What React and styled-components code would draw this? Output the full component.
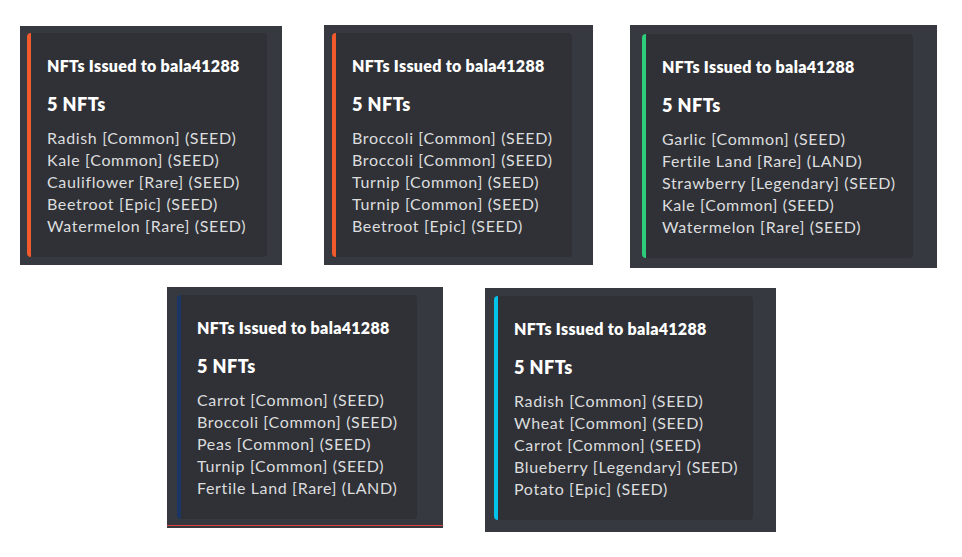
import React from "react";
import styled, { createGlobalStyle, css } from "styled-components";

const Global = createGlobalStyle`
  html, body { margin: 0; padding: 0; background: #ffffff; }
  body { font-family: Lato, "Noto Sans", "Liberation Sans", sans-serif; }
`;

const Page = styled.div`
  width: 962px;
  height: 557px;
  background: #ffffff;
  display: flex;
  flex-direction: column;
  overflow: hidden;
`;

const Row = styled.div`
  display: flex;
  align-items: flex-start;
  padding-top: ${(p) => p.$top}px;
  padding-left: ${(p) => p.$left}px;
`;

const Panel = styled.div`
  background: #36393f;
  display: flex;
  align-items: flex-start;
  margin-left: ${(p) => p.$ml || 0}px;
  margin-top: ${(p) => p.$mt || 0}px;
  padding: ${(p) => p.$pad};
  width: ${(p) => p.$w}px;
  height: ${(p) => p.$h}px;
  box-sizing: border-box;
  ${(p) =>
    p.$redLine &&
    css`
      box-shadow: inset 0 -2px 0 0 #36393f, inset 0 -3px 0 0 #e0413f;
    `}
`;

const Card = styled.div`
  background: #2f3136;
  border-left: 4px solid ${(p) => p.$color};
  border-radius: 4px;
  box-sizing: border-box;
  width: ${(p) => p.$w}px;
  height: 224px;
  padding: 22px 16px 0 16px;
  display: flex;
  flex-direction: column;
`;

const Title = styled.div`
  color: #ffffff;
  font-weight: 800;
  font-size: 16px;
  line-height: 22px;
  white-space: nowrap;
  letter-spacing: 0.3px;
`;

const Count = styled.div`
  color: #ffffff;
  font-weight: 800;
  font-size: 18px;
  line-height: 24px;
  margin-top: 15px;
  white-space: nowrap;
  letter-spacing: 0.5px;
`;

const List = styled.div`
  margin-top: 11px;
  color: #dcddde;
  font-size: 16px;
  line-height: 22px;
  white-space: nowrap;
  letter-spacing: 0.65px;
`;

const Item = styled.div``;

const cards = [
  {
    color: "#f2592b",
    items: [
      "Radish [Common] (SEED)",
      "Kale [Common] (SEED)",
      "Cauliflower [Rare] (SEED)",
      "Beetroot [Epic] (SEED)",
      "Watermelon [Rare] (SEED)",
    ],
  },
  {
    color: "#f2592b",
    items: [
      "Broccoli [Common] (SEED)",
      "Broccoli [Common] (SEED)",
      "Turnip [Common] (SEED)",
      "Turnip [Common] (SEED)",
      "Beetroot [Epic] (SEED)",
    ],
  },
  {
    color: "#2dcc7a",
    items: [
      "Garlic [Common] (SEED)",
      "Fertile Land [Rare] (LAND)",
      "Strawberry [Legendary] (SEED)",
      "Kale [Common] (SEED)",
      "Watermelon [Rare] (SEED)",
    ],
  },
  {
    color: "#1b3565",
    items: [
      "Carrot [Common] (SEED)",
      "Broccoli [Common] (SEED)",
      "Peas [Common] (SEED)",
      "Turnip [Common] (SEED)",
      "Fertile Land [Rare] (LAND)",
    ],
  },
  {
    color: "#04c3ea",
    items: [
      "Radish [Common] (SEED)",
      "Wheat [Common] (SEED)",
      "Carrot [Common] (SEED)",
      "Blueberry [Legendary] (SEED)",
      "Potato [Epic] (SEED)",
    ],
  },
];

function Embed({ data, w }) {
  return (
    <Card $color={data.color} $w={w}>
      <Title>NFTs Issued to bala41288</Title>
      <Count>5 NFTs</Count>
      <List>
        {data.items.map((t, i) => (
          <Item key={i}>{t}</Item>
        ))}
      </List>
    </Card>
  );
}

export default function App() {
  return (
    <Page>
      <Global />
      <Row $top={25} $left={20}>
        <Panel $mt={1} $w={262} $h={239} $pad="7px 0 0 7px">
          <Embed data={cards[0]} w={240} />
        </Panel>
        <Panel $ml={42} $w={269} $h={240} $pad="8px 0 0 8px">
          <Embed data={cards[1]} w={240} />
        </Panel>
        <Panel $ml={37} $w={307} $h={243} $pad="9px 0 0 12px">
          <Embed data={cards[2]} w={271} />
        </Panel>
      </Row>
      <Row $top={19} $left={167}>
        <Panel $w={276} $h={241} $pad="8px 0 0 10px" $redLine>
          <Embed data={cards[3]} w={240} />
        </Panel>
        <Panel $ml={42} $mt={1} $w={291} $h={244} $pad="8px 0 0 9px">
          <Embed data={cards[4]} w={259} />
        </Panel>
      </Row>
    </Page>
  );
}
